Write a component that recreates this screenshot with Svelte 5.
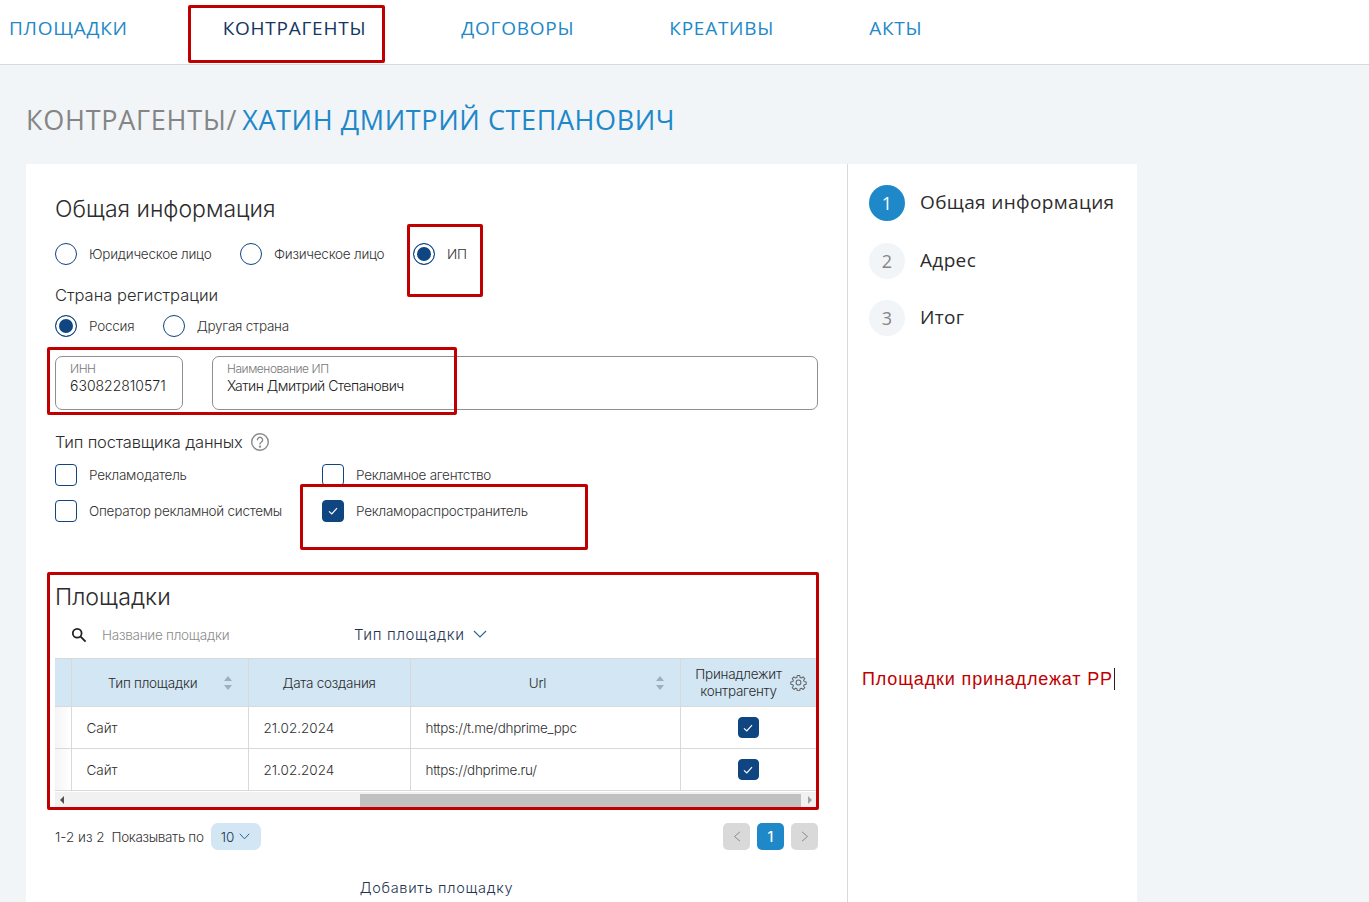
<script>
  const navItems = ['ПЛОЩАДКИ', 'КОНТРАГЕНТЫ', 'ДОГОВОРЫ', 'КРЕАТИВЫ', 'АКТЫ']
  const rows = [
    { type: 'Сайт', date: '21.02.2024', url: 'https://t.me/dhprime_ppc' },
    { type: 'Сайт', date: '21.02.2024', url: 'https://dhprime.ru/' }
  ]
  const steps = ['Общая информация', 'Адрес', 'Итог']
  const annotations = ['nav', 'ip', 'fields', 'adv', 'sites']
</script>

<div class="page">
  <nav class="nav">
    {#each navItems as item, i}
      <a href="#top" class:active={i === 1}>{item}</a>
    {/each}
  </nav>

  <h1 class="title"><span>КОНТРАГЕНТЫ/</span><b>ХАТИН ДМИТРИЙ СТЕПАНОВИЧ</b></h1>

  <div class="card">
    <main class="form">
      <h2>Общая информация</h2>
      <div class="radios first">
        <label class="opt"><i class="radio"></i>Юридическое лицо</label>
        <label class="opt"><i class="radio"></i>Физическое лицо</label>
        <label class="opt"><i class="radio on"></i>ИП</label>
      </div>

      <h3 class="country">Страна регистрации</h3>
      <div class="radios second">
        <label class="opt"><i class="radio on"></i>Россия</label>
        <label class="opt"><i class="radio"></i>Другая страна</label>
      </div>

      <div class="fields">
        <div class="field inn"><small>ИНН</small><span>630822810571</span></div>
        <div class="field name"><small>Наименование ИП</small><span>Хатин Дмитрий Степанович</span></div>
      </div>

      <h3 class="supplier">
        Тип поставщика данных
        <svg width="20" height="20" viewBox="0 0 20 20" fill="none" stroke="#8a8a8a" stroke-width="1.4">
          <circle cx="10" cy="10" r="8.3" />
          <path d="M7.4 7.8a2.6 2.6 0 1 1 4 2.2c-.9.6-1.4 1-1.4 2.1" stroke-linecap="round" />
          <circle cx="10" cy="14.6" r=".5" fill="#8a8a8a" />
        </svg>
      </h3>
      <div class="checks">
        <label class="opt"><i class="check"></i>Рекламодатель</label>
        <label class="opt"><i class="check"></i>Рекламное агентство</label>
        <label class="opt"><i class="check"></i>Оператор рекламной системы</label>
        <label class="opt">
          <i class="check on">
            <svg width="12" height="12" viewBox="0 0 12 12" fill="none" stroke="#fff" stroke-width="1.2"><path d="M2 6.4 4.8 9 10 3.2" /></svg>
          </i>
          Рекламораспространитель
        </label>
      </div>

      <h2 class="sites">Площадки</h2>
      <div class="filters">
        <svg class="search" width="16" height="16" viewBox="0 0 16 16" fill="none" stroke="#222" stroke-width="1.8">
          <circle cx="6.2" cy="6.2" r="4.4" />
          <path d="m9.6 9.6 5 5" />
        </svg>
        <span class="placeholder">Название площадки</span>
        <span class="type-filter">
          Тип площадки
          <svg width="14" height="8" viewBox="0 0 14 8" fill="none" stroke="#2a5f9a" stroke-width="1.1"><path d="m1 1 6 6 6-6" /></svg>
        </span>
      </div>

      <div class="table-wrap">
        <table>
          <colgroup>
            <col class="col-edge" />
            <col class="col-type" />
            <col class="col-date" />
            <col class="col-url" />
            <col />
          </colgroup>
          <thead>
            <tr>
              <th></th>
              <th class="type-head">
                Тип площадки
                <i class="sort"></i>
              </th>
              <th>Дата создания</th>
              <th class="url-head">
                Url
                <i class="sort"></i>
              </th>
              <th>
                <div class="owner">Принадлежит контрагенту</div>
                <svg class="gear" width="17" height="17" viewBox="0 0 24 24" fill="none" stroke="#666" stroke-width="1.5" stroke-linejoin="round">
                  <path d="M10.3 2h3.4l.5 2.9 1.9.8 2.4-1.700 2.400 2.400-1.700 2.400.8 1.900 2.900.5v3.400l-2.900.5-.8 1.900 1.700 2.400-2.400 2.400-2.400-1.700-1.900.8-.5 2.900h-3.400l-.5-2.900-1.900-.8-2.400 1.700-2.400-2.400 1.700-2.400-.8-1.900-2.900-.5v-3.400l2.900-.5.8-1.900-1.700-2.400 2.400-2.400 2.400 1.700 1.900-.8z" />
                  <circle cx="12" cy="12" r="3.4" />
                </svg>
              </th>
            </tr>
          </thead>
          <tbody>
            {#each rows as row}
              <tr>
                <td class="edge"></td>
                <td>{row.type}</td>
                <td>{row.date}</td>
                <td class="url">{row.url}</td>
                <td class="mid">
                  <i class="check on small">
                    <svg width="12" height="12" viewBox="0 0 12 12" fill="none" stroke="#fff" stroke-width="1.2"><path d="M2 6.400 4.800 9 10 3.200" /></svg>
                  </i>
                </td>
              </tr>
            {/each}
          </tbody>
        </table>
        <div class="scrollbar">
          <i class="arrow left"></i>
          <div class="thumb"></div>
          <i class="arrow right"></i>
        </div>
      </div>

      <div class="pager">
        <span class="count">1-2 из 2</span>
        <span class="count show">Показывать по</span>
        <span class="size">
          10
          <svg width="11" height="7" viewBox="0 0 11 7" fill="none" stroke="#2a5f9a" stroke-width="1"><path d="m.8.800 4.700 5 4.700-5" /></svg>
        </span>
        <div class="pages">
          <span class="pg">
            <svg width="8" height="11" viewBox="0 0 8 11" fill="none" stroke="#8a8a8a"><path d="M7 .8 1.500 5.500 7 10.200" /></svg>
          </span>
          <span class="pg current">1</span>
          <span class="pg">
            <svg width="8" height="11" viewBox="0 0 8 11" fill="none" stroke="#8a8a8a"><path d="m1 .8 5.500 4.700L1 10.200" /></svg>
          </span>
        </div>
      </div>

      <div class="add">Добавить площадку</div>
    </main>

    <aside class="steps">
      {#each steps as step, i}
        <div class="step" class:current={i === 0}>
          <span class="num">{i + 1}</span>
          <span class="step-label">{step}</span>
        </div>
      {/each}
      <div class="note">Площадки принадлежат РР<i></i></div>
    </aside>
  </div>

  {#each annotations as a}
    <div class="mark {a}"></div>
  {/each}
</div>

<style>
  :global(body) {
    margin: 0;
    background: #f2f5f8;
    overflow: hidden;
  }

  .page {
    position: relative;
    height: 902px;
    overflow: hidden;
    font-family: Inter, "Liberation Sans", sans-serif;
    color: #3a3a3a;
  }

  .nav {
    display: flex;
    gap: 95px;
    height: 65px;
    padding: 17px 0 0 9px;
    box-sizing: border-box;
    background: #fff;
    border-bottom: 1px solid #d9d9d9;
  }

  .nav a {
    font-family: "Open Sans", sans-serif;
    font-size: 19px;
    line-height: 22px;
    letter-spacing: .75px;
    color: #1e88c8;
    text-decoration: none;
  }

  .nav a.active {
    color: #14365f;
  }

  .title {
    margin: 38px 0 27px 26px;
    height: 34px;
    font-family: "Open Sans", sans-serif;
    font-size: 27px;
    line-height: 34px;
    font-weight: 400;
    letter-spacing: .6px;
    white-space: nowrap;
  }

  .title span {
    letter-spacing: .75px;
    color: #858585;
  }

  .title b {
    margin-left: 5px;
    font-weight: 400;
    color: #1e88c8;
  }

  .card {
    display: flex;
    width: 1111px;
    margin-left: 26px;
    height: 738px;
    background: #fff;
  }

  .form {
    box-sizing: border-box;
    width: 822px;
    padding: 30px 29px 0;
    border-right: 1px solid #d9d9d9;
  }

  h2 {
    margin: 0;
    font-size: 23px;
    line-height: 30px;
    font-weight: 300;
    color: #2c2c2c;
  }

  h3 {
    margin: 0;
    font-size: 16.5px;
    line-height: 20px;
    font-weight: 300;
    color: #2c2c2c;
  }

  .radios {
    display: flex;
    gap: 28.5px;
    height: 22px;
  }

  .first {
    margin-top: 19px;
  }

  .second {
    margin-top: 10px;
  }

  .country {
    margin-top: 20px;
  }

  .opt {
    display: flex;
    align-items: center;
    gap: 12px;
    height: 22px;
    font-size: 13.5px;
    font-weight: 300;
    letter-spacing: -.25px;
    color: #333;
    white-space: nowrap;
  }

  .radio {
    box-sizing: border-box;
    display: block;
    flex: none;
    width: 22px;
    height: 22px;
    border: 1.3px solid #0f4580;
    border-radius: 50%;
    background: #fff;
  }

  .radio.on {
    background: #0f4580;
    box-shadow: inset 0 0 0 3px #fff;
  }

  .fields {
    display: flex;
    gap: 29px;
    margin-top: 19px;
    height: 54px;
    width: 763px;
  }

  .field {
    box-sizing: border-box;
    display: flex;
    flex-direction: column;
    padding: 5px 14px;
    border: 1px solid #8f8f8f;
    border-radius: 7px;
  }

  .field small {
    font-size: 12px;
    line-height: 14px;
    font-weight: 300;
    letter-spacing: -.45px;
    color: #777;
  }

  .field span {
    font-size: 14px;
    line-height: 20px;
    font-weight: 300;
    color: #222;
  }

  .inn {
    flex: none;
    width: 128px;
  }

  .name {
    flex: 1;
  }

  .name span {
    letter-spacing: -.5px;
  }

  .supplier {
    display: flex;
    align-items: center;
    gap: 7px;
    margin-top: 22px;
    letter-spacing: -.2px;
  }

  .checks {
    display: grid;
    grid-template-columns: 267px 1fr;
    row-gap: 14px;
    margin-top: 12px;
  }

  .check {
    box-sizing: border-box;
    display: flex;
    align-items: center;
    justify-content: center;
    flex: none;
    width: 22px;
    height: 22px;
    border: 1.3px solid #0f4580;
    border-radius: 4px;
    background: #fff;
  }

  .check.on {
    background: #0f4580;
  }

  .check.small {
    width: 21px;
    height: 21px;
    margin: 0 auto;
  }

  .sites {
    margin-top: 60px;
    font-size: 23.2px;
  }

  .filters {
    display: flex;
    align-items: center;
    height: 28px;
    margin-top: 9px;
    padding-left: 16px;
  }

  .search {
    flex: none;
  }

  .placeholder {
    width: 252px;
    margin-left: 15px;
    font-size: 13.5px;
    font-weight: 300;
    letter-spacing: -.25px;
    color: #8c8c8c;
  }

  .type-filter {
    display: flex;
    align-items: center;
    gap: 8px;
    padding-bottom: 2px;
    font-size: 15px;
    font-weight: 300;
    letter-spacing: .65px;
    color: #1f3552;
  }

  .table-wrap {
    margin-top: 9px;
    width: 761px;
    height: 150px;
    overflow: hidden;
  }

  table {
    width: 761px;
    table-layout: fixed;
    border-collapse: collapse;
    font-size: 13.5px;
    font-weight: 300;
  }

  .col-edge {
    width: 16px;
  }

  .col-type {
    width: 177px;
  }

  .col-date {
    width: 162px;
  }

  .col-url {
    width: 270px;
  }

  th {
    position: relative;
    box-sizing: border-box;
    height: 48px;
    padding: 0;
    background: #d2e6f4;
    border: 1px solid #d9d9d9;
    font-weight: 300;
    letter-spacing: -.25px;
    color: #2c2c2c;
    text-align: center;
  }

  td {
    box-sizing: border-box;
    height: 42px;
    padding: 0 0 0 15px;
    border: 1px solid #d9d9d9;
    color: #2f2f2f;
  }

  th:first-child, td:first-child {
    border-left: 0;
  }

  th:last-child, td:last-child {
    border-right: 0;
  }

  td.edge {
    padding: 0;
    background: linear-gradient(90deg, #f4f4f4, #fff);
  }

  .type-head {
    padding-right: 14px;
  }

  .url-head {
    padding-right: 15px;
  }

  .url {
    letter-spacing: -.3px;
  }

  .mid {
    padding: 0;
  }

  .owner {
    width: 100px;
    margin-left: 8px;
    line-height: 17px;
  }

  .gear {
    position: absolute;
    top: 15px;
    right: 9px;
  }

  .sort {
    position: absolute;
    top: 17px;
    right: 19px;
    width: 0;
    height: 14px;
  }

  .sort::before, .sort::after {
    content: '';
    position: absolute;
    left: -4.5px;
    border-left: 4.5px solid transparent;
    border-right: 4.5px solid transparent;
  }

  .sort::before {
    top: 0;
    border-bottom: 5.5px solid #9fb0bd;
  }

  .sort::after {
    bottom: 0;
    border-top: 5.5px solid #9fb0bd;
  }

  .scrollbar {
    display: flex;
    align-items: center;
    height: 16px;
    background: #f1f1f1;
    margin-top: 1px;
  }

  .thumb {
    width: 441px;
    height: 13px;
    margin-left: 296px;
    background: #c1c1c1;
  }

  .arrow {
    width: 0;
    height: 0;
    border-top: 4px solid transparent;
    border-bottom: 4px solid transparent;
  }

  .arrow.left {
    margin-left: 5px;
    border-right: 4px solid #505050;
  }

  .arrow.right {
    margin-left: 7px;
    border-left: 4px solid #a3a3a3;
  }

  .pager {
    display: flex;
    align-items: center;
    height: 27px;
    margin-top: 15px;
  }

  .count {
    font-size: 13.5px;
    font-weight: 300;
    color: #333;
  }

  .show {
    margin-left: 7px;
    letter-spacing: -.35px;
  }

  .size {
    display: flex;
    align-items: center;
    justify-content: center;
    gap: 5px;
    width: 50px;
    height: 27px;
    margin-left: 7px;
    border-radius: 7px;
    background: #d2e6f4;
    font-size: 13.5px;
    font-weight: 300;
    color: #1f3552;
  }

  .pages {
    display: flex;
    gap: 7px;
    margin-left: auto;
  }

  .pg {
    display: flex;
    align-items: center;
    justify-content: center;
    width: 27px;
    height: 27px;
    border-radius: 5px;
    background: #d9d9d9;
  }

  .pg.current {
    background: #1e88c8;
    color: #fff;
    font-size: 14px;
    font-weight: 500;
  }

  .add {
    margin-top: 28px;
    font-size: 14.5px;
    line-height: 20px;
    font-weight: 300;
    letter-spacing: .7px;
    color: #1f3552;
    text-align: center;
  }

  .steps {
    position: relative;
    flex: 1;
    padding: 21px 0 0 21px;
  }

  .step {
    display: flex;
    align-items: center;
    gap: 15px;
    height: 36px;
    margin-bottom: 21.5px;
  }

  .num {
    display: flex;
    align-items: center;
    justify-content: center;
    flex: none;
    width: 36px;
    height: 36px;
    border-radius: 50%;
    background: #f2f5f8;
    font-family: "Open Sans", sans-serif;
    font-size: 18px;
    color: #858585;
  }

  .step.current .num {
    background: #1e88c8;
    color: #fff;
  }

  .step-label {
    padding-bottom: 2px;
    font-family: "Open Sans", sans-serif;
    font-size: 19px;
    letter-spacing: .35px;
    color: #2c2c2c;
    white-space: nowrap;
  }

  .note {
    position: absolute;
    left: 14px;
    top: 504px;
    display: flex;
    align-items: center;
    font-family: "Liberation Sans", sans-serif;
    font-size: 18px;
    line-height: 22px;
    letter-spacing: .85px;
    color: #c00000;
    white-space: nowrap;
  }

  .note i {
    width: 1px;
    height: 22px;
    margin-left: 1px;
    background: #222;
  }

  .mark {
    position: absolute;
    box-sizing: border-box;
    border: 3px solid #c00000;
    border-radius: 2px;
  }

  .mark.nav {
    left: 188px;
    top: 5px;
    width: 197px;
    height: 58px;
    padding: 0;
    background: none;
  }

  .mark.ip {
    left: 407px;
    top: 224px;
    width: 76px;
    height: 73px;
  }

  .mark.fields {
    left: 47px;
    top: 347px;
    width: 410px;
    height: 68px;
    margin: 0;
  }

  .mark.adv {
    left: 300px;
    top: 484px;
    width: 288px;
    height: 66px;
  }

  .mark.sites {
    left: 47px;
    top: 572px;
    width: 772px;
    height: 238px;
    margin: 0;
    font-size: 0;
  }
</style>
